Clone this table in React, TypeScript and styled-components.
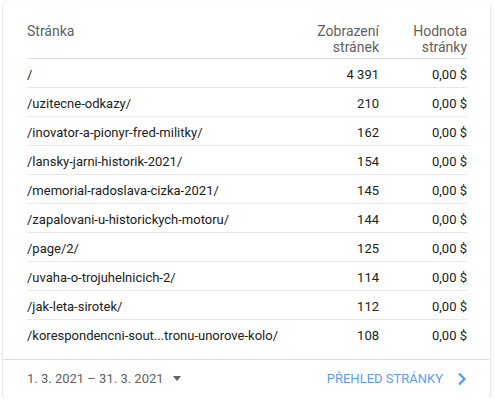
import styled, { createGlobalStyle } from 'styled-components'

type PageRow = {
  path: string
  views: string
  value: string
}

const rows: PageRow[] = [
  { path: '/', views: '4 391', value: '0,00 $' },
  { path: '/uzitecne-odkazy/', views: '210', value: '0,00 $' },
  { path: '/inovator-a-pionyr-fred-militky/', views: '162', value: '0,00 $' },
  { path: '/lansky-jarni-historik-2021/', views: '154', value: '0,00 $' },
  { path: '/memorial-radoslava-cizka-2021/', views: '145', value: '0,00 $' },
  { path: '/zapalovani-u-historickych-motoru/', views: '144', value: '0,00 $' },
  { path: '/page/2/', views: '125', value: '0,00 $' },
  { path: '/uvaha-o-trojuhelnicich-2/', views: '114', value: '0,00 $' },
  { path: '/jak-leta-sirotek/', views: '112', value: '0,00 $' },
  { path: '/korespondencni-sout...tronu-unorove-kolo/', views: '108', value: '0,00 $' },
]

export default function App(): JSX.Element {
  return (
    <>
      <GlobalStyle />
      <Card>
        <Table>
          <thead>
            <tr>
              <HeadCell>Stránka</HeadCell>
              <HeadCell $numeric>
                Zobrazení
                <br />
                stránek
              </HeadCell>
              <HeadCell $numeric>
                Hodnota
                <br />
                stránky
              </HeadCell>
            </tr>
          </thead>
          <tbody>
            {rows.map((row) => (
              <Row key={row.path}>
                <Cell>{row.path}</Cell>
                <Cell $numeric>{row.views}</Cell>
                <Cell $numeric>{row.value}</Cell>
              </Row>
            ))}
          </tbody>
        </Table>
        <Footer>
          <DateRange>
            1. 3. 2021 – 31. 3. 2021
            <Caret />
          </DateRange>
          <ReportLink>
            PŘEHLED STRÁNKY
            <svg width="10" height="14" viewBox="0 0 10 14">
              <path d="M2 1.5 L7.5 7 L2 12.5" fill="none" stroke="currentColor" strokeWidth="2.4" />
            </svg>
          </ReportLink>
        </Footer>
      </Card>
    </>
  )
}

const GlobalStyle = createGlobalStyle`
  body {
    margin: 0;
    background: #fff;
    font-family: Roboto, 'Liberation Sans', sans-serif;
  }
`

const Card = styled.div`
  box-sizing: border-box;
  width: 487px;
  margin: 3px 0 0 3px;
  height: 394px;
  background: #fff;
  border-radius: 2px;
  box-shadow: 0 1px 2px rgba(0, 0, 0, 0.2), 0 1px 3px rgba(0, 0, 0, 0.1);
  display: flex;
  flex-direction: column;
`

const Table = styled.table`
  margin: 20px 23px 0 24px;
  border-collapse: collapse;
  font-size: 13px;
  color: #212121;
`

const HeadCell = styled.th<{ $numeric?: boolean }>`
  font-weight: 400;
  font-size: 14px;
  color: #616161;
  text-align: ${(p) => (p.$numeric ? 'right' : 'left')};
  vertical-align: top;
  line-height: 16px;
  padding: 0 0 3px 0;
  width: ${(p) => (p.$numeric ? '88px' : 'auto')};
  border-bottom: 1px solid #e0e0e0;
`

const Row = styled.tr`
  & + & td {
    border-top: 1px solid #e8e8e8;
  }
`

const Cell = styled.td<{ $numeric?: boolean }>`
  height: 26px;
  padding: 2px 0 0;
  text-align: ${(p) => (p.$numeric ? 'right' : 'left')};
  white-space: nowrap;
`

const Footer = styled.div`
  margin-top: auto;
  height: 37px;
  border-top: 1px solid #e0e0e0;
  display: flex;
  align-items: center;
  justify-content: space-between;
  padding: 0 23px 0 24px;
`

const DateRange = styled.div`
  display: flex;
  align-items: center;
  font-size: 13px;
  color: #616161;
`

const Caret = styled.span`
  margin-left: 9px;
  width: 0;
  height: 0;
  border-left: 4px solid transparent;
  border-right: 4px solid transparent;
  border-top: 5px solid #616161;
`

const ReportLink = styled.a`
  display: flex;
  align-items: center;
  gap: 14px;
  font-size: 13px;
  color: #5e9cf3;
  text-transform: uppercase;
  svg {
    margin-top: 1px;
  }
`
